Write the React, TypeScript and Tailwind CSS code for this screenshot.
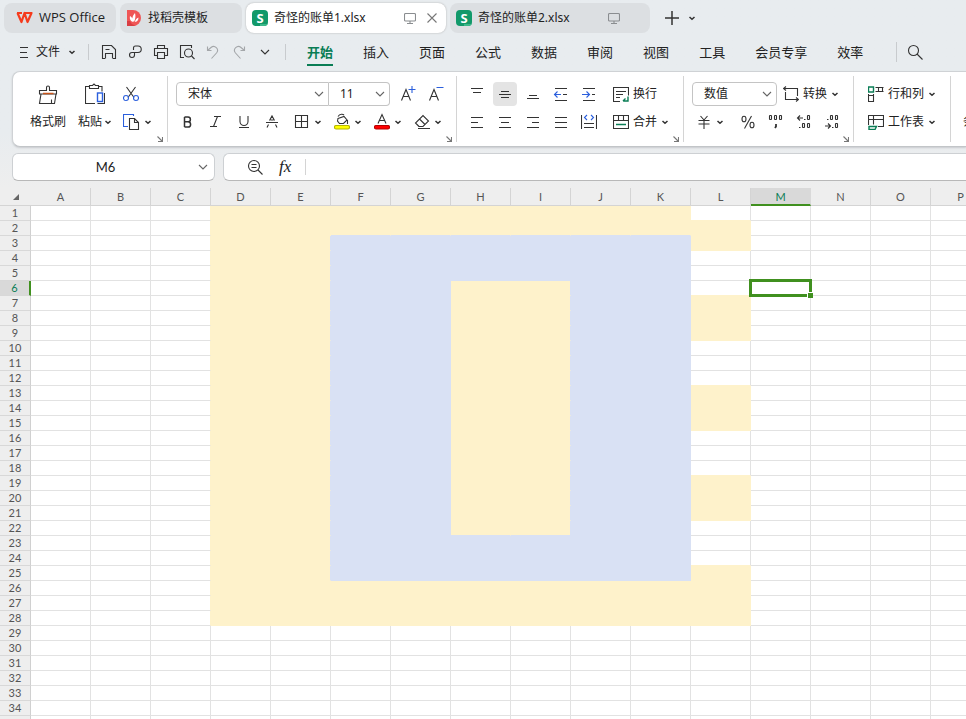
import type { ReactNode } from "react";

const INK = "#333333";
const BLUE = "#2b5fdd";
const GREEN = "#0a7d55";

function Icon({ w = 16, h = 16, color = INK, children }: { w?: number; h?: number; color?: string; children: ReactNode }) {
  return (
    <svg width={w} height={h} viewBox={`0 0 ${w} ${h}`} fill="none" stroke={color} strokeWidth="1.1" className="block shrink-0" aria-hidden="true">
      {children}
    </svg>
  );
}

function Caret() {
  return (
    <Icon w={8} h={8}>
      <path d="M1.5 3 4 5.3 6.5 3" strokeWidth="1.5" />
    </Icon>
  );
}

function WideCaret({ color = "#666666" }: { color?: string }) {
  return (
    <Icon w={10} h={10} color={color}>
      <path d="M1 3 5 7 9 3" />
    </Icon>
  );
}

function Monitor() {
  return (
    <Icon w={12} h={12} color="#8a8d90">
      <rect x="0.5" y="1.5" width="11" height="7.5" rx="1" />
      <path d="M6 9v2M3 11.5h6" />
    </Icon>
  );
}

function SheetLogo() {
  return (
    <span className="relative flex h-4 w-4 shrink-0 items-center justify-center overflow-hidden rounded-sm bg-[#12996a] font-['Open_Sans',sans-serif] text-[13px] leading-4 font-bold text-white">
      <span className="absolute right-0 bottom-0 h-0.5 w-2 bg-[#3cb98a]" />
      S
    </span>
  );
}

function Tool({ label, children, wide, active }: { label: string; children: ReactNode; wide?: boolean; active?: boolean }) {
  return (
    <button
      type="button"
      aria-label={label}
      className={`flex h-6 shrink-0 items-center rounded ${wide ? "w-10 gap-1 px-0.5" : "w-6 justify-center"} ${active ? "bg-[#e4e4e4]" : ""}`}
    >
      {children}
    </button>
  );
}

function TextTool({ icon, text, caret }: { icon: ReactNode; text: string; caret?: boolean }) {
  return (
    <button type="button" className="flex h-6 shrink-0 items-center gap-1 whitespace-nowrap">
      {icon}
      <span>{text}</span>
      {caret && <Caret />}
    </button>
  );
}

function Picker({ label, value, className }: { label: string; value: string; className: string }) {
  return (
    <label className={`relative flex h-6 shrink-0 items-center border border-[#c4c4c4] bg-white ${className}`}>
      <span className="sr-only">{label}</span>
      <select className="h-[22px] w-full appearance-none bg-transparent py-0 pl-[11px] text-xs leading-[22px] outline-none">
        <option>{value}</option>
      </select>
      <span className="pointer-events-none absolute top-1.5 right-1">
        <WideCaret />
      </span>
    </label>
  );
}

function Launcher() {
  return (
    <button type="button" aria-label="更多设置" className="absolute right-1 bottom-0">
      <Icon w={6} h={6} color="#777777">
        <path d="M0.5 0.5 5 5M5.5 1v4.5H1" />
      </Icon>
    </button>
  );
}

const TABS = ["开始", "插入", "页面", "公式", "数据", "审阅", "视图", "工具", "会员专享", "效率"];
const FILE_TOOLS: [string, ReactNode, string][] = [
  ["保存", <><path d="M4 14.5H1.5v-13h9l4 4v9H12" /><path d="M4.5 14.5v-5h7v5M4.5 5.5h4" /></>, INK],
  ["输出", <path d="M6.5 6V4a2 2 0 0 1 2-2h2.500a3.200 3.200 0 0 1 0 6.500H5a2.500 2.500 0 1 0 2.500 2.500V8.500" />, INK],
  ["打印", <path d="M4 11.5H1.5v-7h13v7H12M4.5 4.5v-3h7v3M4.5 8.5h7v6h-7z" />, INK],
  ["打印预览", <><path d="M5 13.5H1.5v-12h11V4" /><circle cx="9.5" cy="9" r="4" /><path d="m12.5 12 3 3" /></>, INK],
  ["撤销", <path d="M2.5 2.500v4h4M2.5 6.500 6 3.500a3.900 3.900 0 0 1 5.500 5.500l-5 5.500" />, "#a4a7aa"],
  ["恢复", <path d="M13.5 2.500v4h-4M13.500 6.500 10 3.500A3.900 3.900 0 0 0 4.500 9l5 5.500" />, "#a4a7aa"],
];

const COLUMNS = "ABCDEFGHIJKLMNOP".split("");
const ROWS = Array.from({ length: 35 }, (_, i) => i + 1);

type Fill = "none" | "yellow" | "blue";

function fillOf(col: number, row: number): Fill {
  if (row < 1 || row > 28 || col < 3 || col > 11) return "none";
  if (col === 11) {
    const striped = (row > 1 && row < 4) || (row > 6 && row < 10) || (row > 12 && row < 16) || (row > 18 && row < 22) || row > 24;
    return striped ? "yellow" : "none";
  }
  if (col >= 5 && row >= 3 && row <= 25) {
    return (col === 7 || col === 8) && row >= 6 && row <= 22 ? "yellow" : "blue";
  }
  return "yellow";
}

function edge(a: Fill, b: Fill): Fill {
  if (a === "blue" || b === "blue") return "blue";
  return a === "yellow" || b === "yellow" ? "yellow" : "none";
}

const BG = { none: "bg-white", yellow: "bg-[#fef2cb]", blue: "bg-[#d9e1f4]" };
const RIGHT = { none: "border-r-[#e2e2e2]", yellow: "border-r-[#fef2cb]", blue: "border-r-[#d9e1f4]" };
const BOTTOM = { none: "border-b-[#e2e2e2]", yellow: "border-b-[#fef2cb]", blue: "border-b-[#d9e1f4]" };

function Sheet() {
  return (
    <table className="w-[991px] shrink-0 table-fixed border-separate border-spacing-0 font-['Lato',sans-serif] text-[11px] leading-[14px] text-[#555555]">
      <colgroup>
        <col className="w-[31px]" />
        {COLUMNS.map((c) => (
          <col key={c} className="w-[60px]" />
        ))}
      </colgroup>
      <thead>
        <tr className="h-[18px]">
          <th className="border-b border-[#d4d4d4] bg-[#eeeeee] p-0" aria-label="全选">
            <svg width="6" height="6" className="mx-auto block" aria-hidden="true">
              <path d="M6 0v6H0z" fill="#666666" />
            </svg>
          </th>
          {COLUMNS.map((c) => (
            <th
              key={c}
              className={`h-[18px] border-r p-0 text-center font-normal ${c === "M" ? "border-b-2 border-r-[#d9d9d9] border-b-[#40901f] bg-[#d9d9d9] pt-px text-[#0a7d55]" : "border-b border-[#d4d4d4] bg-[#eeeeee]"}`}
            >
              {c}
            </th>
          ))}
        </tr>
      </thead>
      <tbody>
        {ROWS.map((r) => (
          <tr key={r} className="h-[15px]">
            <th
              className={`h-[15px] border-b border-b-[#d8d8d8] p-0 text-center font-normal ${r === 6 ? "border-r-2 border-r-[#40901f] bg-[#d9d9d9] text-[#0a7d55]" : "border-r border-r-[#d0d0d0] bg-[#eeeeee]"}`}
            >
              {r}
            </th>
            {COLUMNS.map((c, i) => {
              const own = fillOf(i, r);
              const right = edge(own, fillOf(i + 1, r));
              const bottom = edge(own, fillOf(i, r + 1));
              return (
                <td key={c} className={`relative border-r border-b p-0 ${BG[own]} ${RIGHT[right]} ${BOTTOM[bottom]}`}>
                  {c === "M" && r === 6 && (
                    <div className="absolute -inset-0.5 z-10 border-[3px] border-[#40901f]">
                      <span className="absolute -right-1 -bottom-1 h-1.5 w-1.5 border-t border-l border-white bg-[#40901f]" />
                    </div>
                  )}
                </td>
              );
            })}
          </tr>
        ))}
      </tbody>
    </table>
  );
}

export default function App() {
  return (
    <div className="flex h-screen flex-col overflow-hidden bg-[#eeeeee] font-['Noto_Sans','Noto_Sans_CJK_SC',sans-serif] text-xs text-[#222222]">
      <div className="shrink-0 bg-linear-to-b from-[#e8ecef] from-70% to-[#eeeeee] pb-[7px]">
        <div className="flex items-center gap-1 pt-[3px] pl-1">
          <button type="button" className="flex h-[30px] w-28 shrink-0 items-center gap-1.5 rounded-lg bg-[#dcdfe2] pl-3 font-['Open_Sans',sans-serif] text-[13px] whitespace-nowrap">
            <svg width="17" height="14" viewBox="0 0 17 14" fill="none" aria-hidden="true">
              <path d="M1 2h5M1.5 2l4 9 3-9 3 9 4-9H9" stroke="#f53b1d" strokeWidth="2.2" strokeLinejoin="round" />
            </svg>
            WPS Office
          </button>
          <button type="button" className="flex h-[30px] w-[122px] shrink-0 items-center gap-1.5 rounded-lg bg-[#dcdfe2] pl-1.5 whitespace-nowrap">
            <svg width="16" height="16" viewBox="0 0 16 16" aria-hidden="true">
              <path d="M1 0h6a8 8 0 0 1 0 16H1z" fill="#ef5656" />
              <path d="M1 11h3c1 3 3 4 6 4.400L7 16H1z" fill="#d93d42" />
              <path d="M8 12C5.500 10 6 6 9 3c.8 3 .5 6-1 9zM7 12C4 11 3.500 8.500 4 6c2 1 3 3 3 6zM9 12c.2-2 1.500-4 3.500-4.500C12.500 10 11.500 11.500 9 12z" fill="white" />
            </svg>
            找稻壳模板
          </button>
          <div className="flex h-[30px] w-[200px] shrink-0 items-center rounded-lg bg-white pr-2 pl-1.5 shadow-[0_0_2px_#aaaaaa]">
            <SheetLogo />
            <span className="ml-1.5 flex-1 whitespace-nowrap">奇怪的账单1.xlsx</span>
            <Monitor />
            <button type="button" aria-label="关闭" className="ml-2.5">
              <Icon w={12} h={12} color="#777777">
                <path d="m1.500 1.500 9 9m0-9-9 9" />
              </Icon>
            </button>
          </div>
          <div className="flex h-[30px] w-[200px] shrink-0 items-center rounded-lg bg-[#dcdfe2] pr-[30px] pl-1.5">
            <SheetLogo />
            <span className="ml-1.5 flex-1 whitespace-nowrap">奇怪的账单2.xlsx</span>
            <Monitor />
          </div>
          <button type="button" aria-label="新建" className="ml-2.5">
            <Icon>
              <path d="M8 1v14M1 8h14" strokeWidth="1.5" />
            </Icon>
          </button>
          <button type="button" aria-label="新建选项" className="ml-1">
            <Caret />
          </button>
        </div>

        <nav className="flex h-[38px] items-center">
          <button type="button" className="ml-[18px] flex items-center gap-1.5 whitespace-nowrap">
            <Icon w={12} h={14}>
              <path d="M2 2.500h8M2 7.500h7M2 12.500h8" />
            </Icon>
            文件
            <span className="ml-0.5">
              <Caret />
            </span>
          </button>
          <span className="ml-3 h-4 w-px bg-[#c8cbce]" />
          <div className="ml-[7px] flex">
            {FILE_TOOLS.map(([label, art, color]) => (
              <button key={label} type="button" aria-label={label} className="flex h-6 w-[26px] items-center justify-center">
                <Icon color={color}>{art}</Icon>
              </button>
            ))}
            <button type="button" aria-label="更多" className="flex h-6 w-[26px] items-center justify-center">
              <WideCaret color={INK} />
            </button>
          </div>
          <span className="ml-[7px] h-4 w-px bg-[#c8cbce]" />
          <div className="ml-[21px] flex gap-[30px] text-[13px]">
            {TABS.map((t, i) => (
              <button
                key={t}
                type="button"
                className={`h-7 border-b-2 pt-[3px] leading-[23px] whitespace-nowrap ${i === 0 ? "border-[#0a7d55] font-bold text-[#0a7d55]" : "border-transparent"}`}
              >
                {t}
              </button>
            ))}
          </div>
          <span className="ml-[33px] h-5 w-px bg-[#c8cbce]" />
          <button type="button" aria-label="搜索" className="ml-2.5">
            <Icon>
              <circle cx="6.500" cy="6.500" r="5" />
              <path d="m10 10 5.500 5.500" />
            </Icon>
          </button>
        </nav>

        <div className="ml-3 flex h-[76px] overflow-hidden rounded-l-lg border border-r-0 border-[#cfd2d5] border-b-[#c2c5c8] bg-white py-1 shadow-[0_1px_2px_#c8cbce]">
          <div className="relative flex w-[155px] shrink-0 border-r border-[#d4d4d4] pt-1.5 pl-[17px]">
            <button type="button" className="flex w-9 flex-col items-center gap-1 whitespace-nowrap">
              <span className="flex h-6 items-center">
                <Icon w={20} h={22}>
                  <path d="M8.500 7.500v-3a1.500 1.500 0 1 1 3 0v3h7v3.500h-17V7.500zM3 11l-1.500 9.500h15L18 11M13.500 16.500v4" />
                  <path d="M5 10.500h10.500" stroke="#c8551b" strokeWidth="1.400" />
                </Icon>
              </span>
              <span className="leading-6">格式刷</span>
            </button>
            <button type="button" className="ml-3 flex w-[34px] flex-col items-center gap-1 whitespace-nowrap">
              <span className="flex h-6 items-center">
                <Icon w={20} h={22}>
                  <path d="M4 3.500H.5v17H10M14 3.500h3v5M4.500 5.500v-3h3l1.500-1.500 1.500 1.500h3v3zM19.500 10v10.500h-7" />
                  <rect x="12.500" y="10" width="5" height="8.500" stroke={BLUE} strokeWidth="1.400" />
                </Icon>
              </span>
              <span className="flex h-6 items-center gap-0.5">
                粘贴
                <Caret />
              </span>
            </button>
            <div className="ml-[7px] flex flex-col gap-1">
              <Tool label="剪切">
                <Icon w={16}>
                  <path d="m3.500 1 7.500 10.500M12.500 1 5 11.500" />
                  <circle cx="3" cy="12" r="2.500" stroke={BLUE} />
                  <circle cx="13" cy="12" r="2.500" stroke={BLUE} />
                </Icon>
              </Tool>
              <div className="ml-0.5">
                <Tool label="复制" wide>
                  <Icon w={17} h={18}>
                    <path d="M5 13.500H.5v-12h10V3" stroke={BLUE} />
                    <path d="M6.500 5.500h5l4 4v7h-9zM11.500 5.500v4h4" />
                  </Icon>
                  <Caret />
                </Tool>
              </div>
            </div>
            <Launcher />
          </div>

          <div className="relative flex w-[289px] shrink-0 flex-col gap-1 border-r border-[#d4d4d4] pt-1.5">
            <div className="ml-2 flex items-center">
              <Picker label="字体" value="宋体" className="w-[153px] rounded-l" />
              <Picker label="字号" value="11" className="w-[61px] rounded-r border-l-0" />
              <div className="ml-1.5 flex gap-1">
                <Tool label="增大字号">
                  <Icon w={18} h={18}>
                    <path d="m2.500 15.500 4.500-11 4.500 11M4 11.500h6" />
                    <path d="M9.500 4.500h7M13 1v7" stroke={BLUE} />
                  </Icon>
                </Tool>
                <Tool label="减小字号">
                  <Icon w={18} h={18}>
                    <path d="m2.500 15.500 4.500-11 4.500 11M4 11.500h6" />
                    <path d="M9.500 2.500h7" stroke={BLUE} />
                  </Icon>
                </Tool>
              </div>
            </div>
            <div className="ml-2 flex items-center gap-1">
              <Tool label="加粗">
                <Icon>
                  <path d="M4.500 3v10M4.500 3H8a2.400 2.400 0 0 1 0 4.800H4.500M8 7.800a2.600 2.600 0 0 1 0 5.200H4.500" strokeWidth="1.500" />
                </Icon>
              </Tool>
              <Tool label="倾斜">
                <Icon>
                  <path d="M6 2.500h7M2 12.500h7M9.500 2.500l-4 10" />
                </Icon>
              </Tool>
              <Tool label="下划线">
                <Icon>
                  <path d="M4 2v5.500a4 4 0 0 0 8 0V2M3 13.500h10" />
                </Icon>
              </Tool>
              <Tool label="删除线">
                <Icon>
                  <path d="M2 8.500h12M5.500 6.500 8 2l2.500 4.500M4.500 10.500 3 13.500M11.500 10.500l1.500 3M6.500 6h3" />
                </Icon>
              </Tool>
              <div className="ml-1 flex">
                <Tool label="边框" wide>
                  <Icon>
                    <path d="M1.500 1.500h12v12h-12zM7.500 1.500v12M1.500 7.500h12" />
                  </Icon>
                  <Caret />
                </Tool>
                <Tool label="填充颜色" wide>
                  <Icon h={18}>
                    <path d="M4 3.500c2-3 5-2.500 6-1.500M4 5.500l6-2 3 3.500-3.500 3.500h-4L3.500 8zM13.500 7v4" />
                    <rect x="0.500" y="12.500" width="15" height="3.500" rx="1.500" fill="#ffff00" stroke="#b5b500" />
                  </Icon>
                  <Caret />
                </Tool>
                <Tool label="字体颜色" wide>
                  <Icon h={18}>
                    <path d="M4 10.500 8 1.500l4 9M5.500 7.500h5" />
                    <rect x="0.500" y="12.500" width="15" height="3.500" rx="1.500" fill="#ff0000" stroke="#b50000" />
                  </Icon>
                  <Caret />
                </Tool>
                <Tool label="清除" wide>
                  <Icon>
                    <path d="M5 12.500 1.500 9 9 1.500 14.500 7 9 12.500zM5.500 5l5.500 5.500M4 14.500h12" />
                  </Icon>
                  <Caret />
                </Tool>
              </div>
            </div>
            <Launcher />
          </div>

          <div className="relative flex w-[227px] shrink-0 flex-col gap-1 border-r border-[#d4d4d4] pt-1.5 pl-2">
            <div className="flex items-center gap-1">
              <Tool label="顶端对齐">
                <Icon><path d="M2 2.500h12M4 6.500h8" /></Icon>
              </Tool>
              <Tool label="垂直居中" active>
                <Icon><path d="M4 5.500h8M2 8.500h12M4 11.500h8" /></Icon>
              </Tool>
              <Tool label="底端对齐">
                <Icon><path d="M4 9.500h8M2 12.500h12" /></Icon>
              </Tool>
              <Tool label="减少缩进">
                <Icon>
                  <path d="M2 2.500h12M10 8.500h4M2 14.500h12" />
                  <path d="M8 8.500H1.500M4.500 5.500l-3 3 3 3" stroke={BLUE} />
                </Icon>
              </Tool>
              <Tool label="增加缩进">
                <Icon>
                  <path d="M2 2.500h12M11 8.500h3M2 14.500h12" />
                  <path d="M1 8.500h7.500M5.500 5.500l3 3-3 3" stroke={BLUE} />
                </Icon>
              </Tool>
              <div className="ml-2">
                <TextTool
                  text="换行"
                  icon={
                    <Icon>
                      <path d="M7 15.500H.5v-14h15v8M3 5.500h10M3 8.500h7M3 11.500h4" />
                      <path d="M15 10.500v4.500h-5M12.500 12.500 10 15" stroke={GREEN} strokeWidth="1.400" />
                    </Icon>
                  }
                />
              </div>
            </div>
            <div className="flex items-center gap-1">
              <Tool label="左对齐">
                <Icon><path d="M2 3.500h12M2 8.500h7M2 13.500h12" /></Icon>
              </Tool>
              <Tool label="水平居中">
                <Icon><path d="M2 3.500h12M4 8.500h8M2 13.500h12" /></Icon>
              </Tool>
              <Tool label="右对齐">
                <Icon><path d="M2 3.500h12M7 8.500h7M2 13.500h12" /></Icon>
              </Tool>
              <Tool label="两端对齐">
                <Icon><path d="M2 3.500h12M2 8.500h12M2 13.500h12" /></Icon>
              </Tool>
              <Tool label="分散对齐">
                <Icon>
                  <path d="M.5 1v14M15.500 1v14M3 9.500h10M3 13.500h10" />
                  <path d="m6 1-2.500 2.500L6 6M10 1l2.500 2.500L10 6" stroke={BLUE} />
                </Icon>
              </Tool>
              <div className="ml-2">
                <TextTool
                  text="合并"
                  caret
                  icon={
                    <Icon>
                      <path d="M.5 1.500h15v13H.5zM.5 6.500h15M5.500 1.500v5M10.500 1.500v5" />
                      <path d="M3 10.500h10" stroke={GREEN} strokeWidth="1.400" />
                    </Icon>
                  }
                />
              </div>
            </div>
            <Launcher />
          </div>

          <div className="relative flex w-[170px] shrink-0 flex-col gap-1 border-r border-[#d4d4d4] pt-1.5 pl-2">
            <div className="flex items-center gap-1.5">
              <Picker label="数字格式" value="数值" className="w-[85px] rounded" />
              <TextTool
                text="转换"
                caret
                icon={
                  <Icon>
                    <path d="M.5 2.500h14V10M3 .5l-2.500 2L3 4.500M2.500 6v7.500h13M13 11.500l2.500 2-2.500 2" />
                  </Icon>
                }
              />
            </div>
            <div className="flex items-center gap-1">
              <Tool label="货币格式" wide>
                <span className="ml-1">
                  <Icon w={12}>
                    <path d="m2.500 2 3.500 4 3.500-4M.5 6.500h11M.5 10h11M6 6.500v8.500" />
                  </Icon>
                </span>
                <span className="ml-0.5">
                  <Caret />
                </span>
              </Tool>
              <Tool label="百分比">
                <Icon>
                  <path d="M11.500 2 4.500 14.500" />
                  <ellipse cx="4" cy="5" rx="2" ry="2.800" />
                  <ellipse cx="12" cy="11" rx="2" ry="2.800" />
                </Icon>
              </Tool>
              <Tool label="千位分隔">
                <Icon>
                  <rect x="1.500" y="1.500" width="2" height="4" rx="0.500" />
                  <rect x="6.500" y="1.500" width="2" height="4" rx="0.500" />
                  <rect x="11.500" y="1.500" width="2" height="4" rx="0.500" />
                  <path d="M8 10v2.500l-1 1.500" strokeWidth="1.800" />
                </Icon>
              </Tool>
              <Tool label="增加小数位">
                <Icon>
                  <path d="M7 4H1.500M4 1.500 1.500 4 4 6.500M8 5.500h1.500M3 13.500h1.500" />
                  <rect x="11.500" y="1.500" width="2" height="4" rx="0.500" />
                  <rect x="6.500" y="9.500" width="2" height="4" rx="0.500" />
                  <rect x="11.500" y="9.500" width="2" height="4" rx="0.500" />
                </Icon>
              </Tool>
              <Tool label="减少小数位">
                <Icon>
                  <path d="M1 12h5.500M4 9.500 6.500 12 4 14.500M8 13.500h1.500M3 5.500h1.500" />
                  <rect x="6.500" y="1.500" width="2" height="4" rx="0.500" />
                  <rect x="11.500" y="1.500" width="2" height="4" rx="0.500" />
                  <rect x="11.500" y="9.500" width="2" height="4" rx="0.500" />
                </Icon>
              </Tool>
            </div>
            <Launcher />
          </div>

          <div className="flex w-[97px] shrink-0 flex-col gap-1 border-r border-[#d4d4d4] pt-1.5 pl-3.5">
            <TextTool
              text="行和列"
              caret
              icon={
                <Icon>
                  <path d="M.5 1h5v5h-5z" stroke={GREEN} strokeWidth="1.400" />
                  <path d="M7.500 1.500h8M7.500 5.500h8M10.500 1.500v4M14.500 1.500v4M.5 8v7.500h5V8M.5 9.500h5" />
                </Icon>
              }
            />
            <TextTool
              text="工作表"
              caret
              icon={
                <Icon>
                  <path d="M.5 11V1.500h15v11H10M.5 5.500h15M5.500 1.500v9" />
                  <path d="M1 12.500h7.500L7 15.500H1z" stroke={GREEN} strokeWidth="1.400" />
                </Icon>
              }
            />
          </div>
          <button type="button" className="ml-3 self-start pt-[34px] leading-6 whitespace-nowrap">
            条件格式
          </button>
        </div>

        <div className="mt-1.5 ml-3 flex gap-2">
          <div className="flex h-7 w-[203px] shrink-0 items-center rounded-md border border-[#cdd0d3] border-b-[#b8b8b8] bg-white">
            <input aria-label="名称框" defaultValue="M6" className="h-6 min-w-0 flex-1 bg-transparent text-center font-['Lato',sans-serif] text-[13px] outline-none" />
            <button type="button" aria-label="展开名称框" className="w-4">
              <WideCaret />
            </button>
          </div>
          <div className="flex h-7 flex-1 items-center rounded-l-md border border-r-0 border-[#cdd0d3] border-b-[#b8b8b8] bg-white pl-[23px]">
            <button type="button" aria-label="缩小">
              <Icon>
                <circle cx="7" cy="7" r="5.500" />
                <path d="m11 11 4.500 4.500M4.500 5.500h5M4.500 8.500h5" />
              </Icon>
            </button>
            <button type="button" aria-label="插入函数" className="ml-4 font-['Liberation_Serif',serif] text-[17px] leading-5 italic">
              fx
            </button>
            <span className="ml-3.5 h-4 w-px bg-[#d4d4d4]" />
            <input aria-label="编辑栏" className="h-6 min-w-0 flex-1 bg-transparent px-2 outline-none" />
          </div>
        </div>
      </div>
      <Sheet />
    </div>
  );
}
